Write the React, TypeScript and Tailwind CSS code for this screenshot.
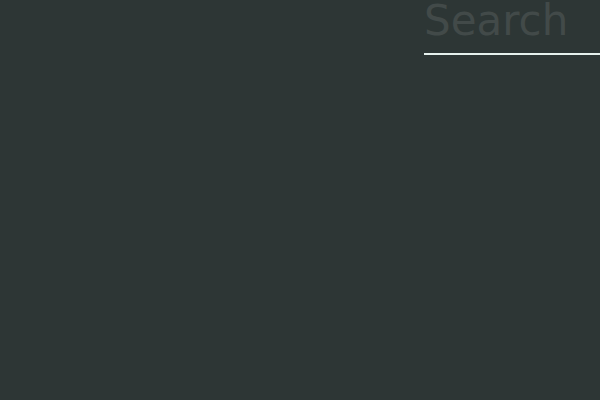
const SearchBar = () => {
  return (
    <form className="w-44 border-b-2 border-[#e6f2ee]" role="search">
      <input
        type="search"
        name="search"
        aria-label="Search"
        placeholder="Search"
        className="block w-full h-[53px] pb-3 text-[42px] text-[#e6f2ee] bg-transparent outline-none placeholder:text-[#424a49]"
      />
    </form>
  );
};

const App = () => {
  return (
    <div className="min-h-screen flex flex-col bg-[#2d3635] font-['DejaVu_Sans',sans-serif]">
      <header className="flex justify-end">
        <SearchBar />
      </header>
    </div>
  );
};

export default App;
